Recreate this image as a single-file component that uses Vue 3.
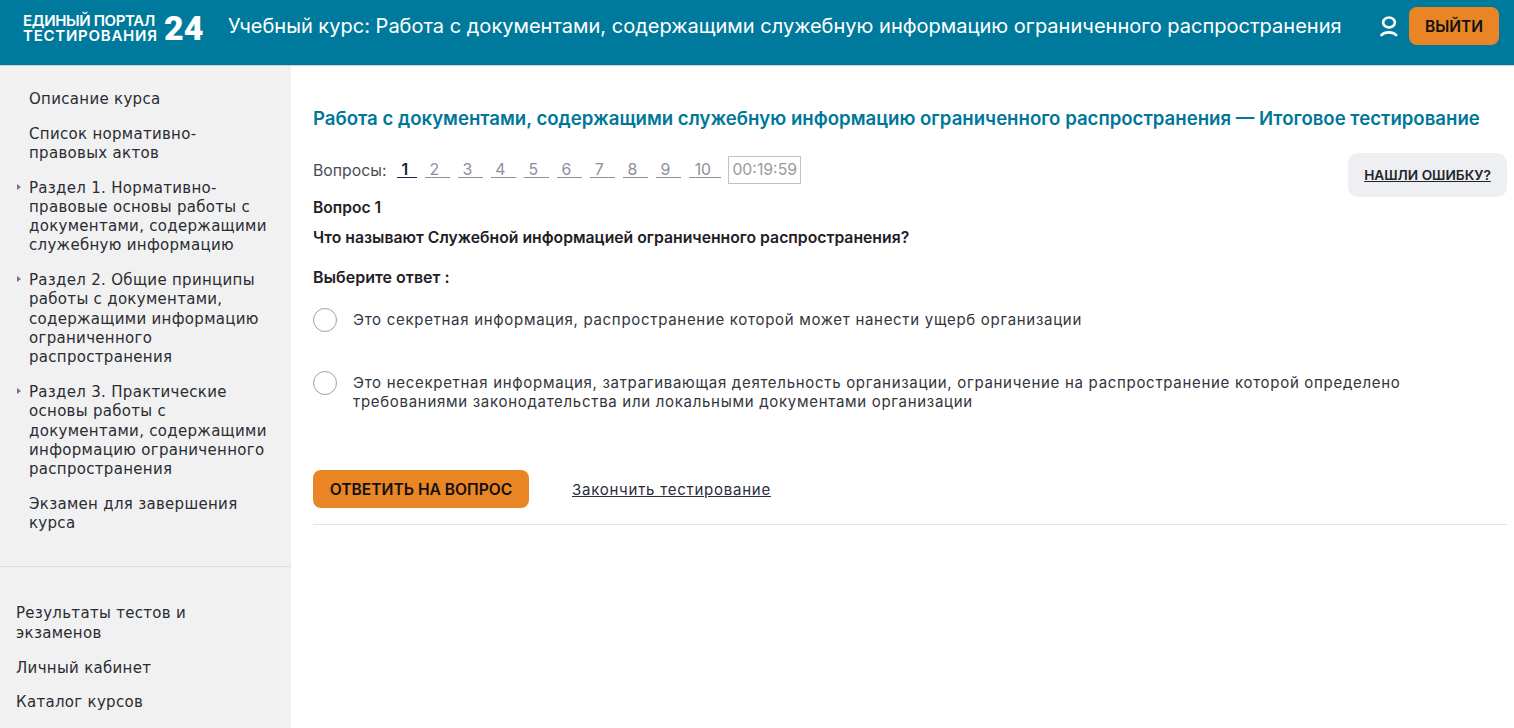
<template>
  <div class="page">
    <header class="topbar">
      <div class="logo">
        <div class="logo-text">
          <span class="logo-line1">ЕДИНЫЙ ПОРТАЛ</span>
          <span class="logo-line2">ТЕСТИРОВАНИЯ</span>
        </div>
        <div class="logo-num">24</div>
      </div>
      <div class="course-title">Учебный курс: Работа с документами, содержащими служебную информацию ограниченного распространения</div>
      <svg class="user-icon" width="18" height="21" viewBox="0 0 18 21" fill="none" stroke="#fff" stroke-width="2.6">
        <ellipse cx="9" cy="6.5" rx="5.9" ry="4.95" />
        <path d="M1.5 19 C5 15.5 12.6 15.5 16.1 19" stroke-linecap="round" />
      </svg>
      <button class="logout">ВЫЙТИ</button>
    </header>

    <div class="layout">
      <aside class="sidebar">
        <ul class="course-menu">
          <li v-for="item in courseMenu" :key="item.text" :class="{ arrow: item.arrow }">{{ item.text }}</li>
        </ul>
        <ul class="user-menu">
          <li v-for="item in userMenu" :key="item">{{ item }}</li>
        </ul>
      </aside>

      <main class="content">
        <h1 class="test-title">Работа с документами, содержащими служебную информацию ограниченного распространения — Итоговое тестирование</h1>

        <div class="nav-row">
          <div class="questions">
            <span class="questions-label">Вопросы:</span>
            <a
              v-for="n in 10"
              :key="n"
              class="q-link"
              :class="{ active: n === 1, wide: n === 10 }"
            >{{ n }}</a>
            <span class="timer">00:19:59</span>
          </div>
          <a class="report">НАШЛИ ОШИБКУ?</a>
        </div>

        <div class="q-num">Вопрос 1</div>
        <div class="q-text">Что называют Служебной информацией ограниченного распространения?</div>
        <div class="q-hint">Выберите ответ :</div>

        <label v-for="a in answers" :key="a" class="answer">
          <span class="radio"></span>
          <span class="answer-text">{{ a }}</span>
        </label>

        <div class="actions">
          <button class="submit">ОТВЕТИТЬ НА ВОПРОС</button>
          <a class="finish">Закончить тестирование</a>
        </div>
      </main>
    </div>
  </div>
</template>

<script setup>
const courseMenu = [
  { text: 'Описание курса' },
  { text: 'Список нормативно-правовых актов' },
  { text: 'Раздел 1. Нормативно-правовые основы работы с документами, содержащими служебную информацию', arrow: true },
  { text: 'Раздел 2. Общие принципы работы с документами, содержащими информацию ограниченного распространения', arrow: true },
  { text: 'Раздел 3. Практические основы работы с документами, содержащими информацию ограниченного распространения', arrow: true },
  { text: 'Экзамен для завершения курса' }
]

const userMenu = ['Результаты тестов и экзаменов', 'Личный кабинет', 'Каталог курсов']

const answers = [
  'Это секретная информация, распространение которой может нанести ущерб организации',
  'Это несекретная информация, затрагивающая деятельность организации, ограничение на распространение которой определено требованиями законодательства или локальными документами организации'
]
</script>

<style>
html, body {
  margin: 0;
  background: #fff;
}
</style>

<style scoped>
.page {
  height: 728px;
  overflow: hidden;
  font-family: Inter, "Noto Sans", sans-serif;
  color: #22242a;
}

/* шапка */
.topbar {
  position: relative;
  height: 65px;
  box-sizing: border-box;
  display: flex;
  align-items: flex-start;
  background: #007a9c;
  box-shadow: 0 1px 0 #cfd2d4;
  padding: 7px 15px 0 23px;
}
.logo {
  display: flex;
  align-items: center;
  height: 41px;
  width: 182px;
  flex-shrink: 0;
  color: #fff;
}
.logo-text {
  display: flex;
  flex-direction: column;
  font-size: 15px;
  font-weight: 600;
  line-height: 15px;
  width: 139px;
  flex-shrink: 0;
  white-space: nowrap;
}
.logo-line1 {
  letter-spacing: -0.35px;
}
.logo-line2 {
  letter-spacing: 0.75px;
}
.logo-num {
  margin: 1px 0 0 2px;
  font-family: Roboto, sans-serif;
  font-size: 34px;
  font-weight: 900;
  line-height: 38px;
}
.course-title {
  margin-left: 23px;
  margin-top: 7px;
  font-size: 20.05px;
  line-height: 24px;
  color: #fff;
  white-space: nowrap;
  flex: 1;
}
.user-icon {
  margin-top: 9px;
  margin-right: 11px;
  flex-shrink: 0;
}
.logout {
  width: 90px;
  height: 38px;
  flex-shrink: 0;
  border: none;
  border-radius: 8px;
  background: #e98525;
  color: #111;
  font-family: inherit;
  font-size: 15.5px;
  font-weight: 600;
  padding: 0;
}

.layout {
  display: flex;
  height: 663px;
}

/* боковое меню */
.sidebar {
  width: 291px;
  flex-shrink: 0;
  background: #f1f1f1;
  font-family: "DejaVu Sans", sans-serif;
  font-size: 15px;
  letter-spacing: 0.3px;
  line-height: 19.25px;
  color: #2a2c33;
}
.course-menu {
  list-style: none;
  margin: 0;
  padding: 24.7px 20px 33px 29px;
  border-bottom: 1px solid #dcdcdc;
}
.course-menu li {
  position: relative;
  margin-bottom: 15.6px;
}
.course-menu li:last-child {
  margin-bottom: 0;
}
.course-menu li.arrow::before {
  content: "";
  position: absolute;
  left: -12px;
  top: 5px;
  border-left: 4px solid #777;
  border-top: 3.5px solid transparent;
  border-bottom: 3.5px solid transparent;
}
.user-menu {
  list-style: none;
  margin: 0;
  padding: 37px 35px 0 16px;
}
.user-menu li {
  margin-bottom: 15.6px;
}

/* контент */
.content {
  flex: 1;
  min-width: 0;
  padding: 0 7px 0 22px;
}
.test-title {
  margin: 41px 0 0;
  font-size: 18.6px;
  line-height: 24px;
  font-weight: 600;
  color: #00779a;
  white-space: nowrap;
}
.nav-row {
  display: flex;
  justify-content: space-between;
  align-items: flex-start;
  margin-top: 23px;
  height: 44px;
}
.questions {
  display: flex;
  align-items: center;
  margin-top: 3px;
  height: 28px;
  font-size: 15.8px;
}
.questions-label {
  margin-right: 10.4px;
  color: #4a4c52;
}
.q-link {
  box-sizing: border-box;
  width: 25px;
  margin-right: 8px;
  text-align: center;
  line-height: 15px;
  color: #8b8f9c;
  padding-right: 6px;
  border-bottom: 1px solid #8b8f9c;
}
.q-link.active {
  width: 20px;
  padding-right: 4px;
  font-weight: 600;
  color: #1c2340;
  border-bottom-color: #1c2340;
}
.q-link.wide {
  width: 32px;
  margin-right: 7.4px;
  padding-right: 4px;
}
.timer {
  box-sizing: border-box;
  width: 73px;
  height: 28px;
  line-height: 26px;
  text-align: center;
  border: 1px solid #b8c4d4;
  color: #9a9a9a;
  white-space: nowrap;
}
.report {
  box-sizing: border-box;
  width: 159px;
  height: 44px;
  line-height: 44px;
  text-align: center;
  border-radius: 10px;
  background: #eeeff3;
  color: #22242a;
  font-size: 13.65px;
  font-weight: 600;
  text-decoration: underline;
}
.q-num, .q-text, .q-hint {
  font-weight: 600;
  line-height: 20px;
  color: #1f2025;
}
.q-num {
  margin-top: 1px;
  font-size: 15.6px;
}
.q-text {
  margin-top: 10px;
  font-size: 15.75px;
}
.q-hint {
  margin-top: 19px;
  margin-bottom: 21px;
  font-size: 16px;
}
.answer {
  display: flex;
  align-items: flex-start;
  margin-bottom: 39px;
}
.radio {
  flex-shrink: 0;
  box-sizing: border-box;
  width: 24px;
  height: 24px;
  border-radius: 50%;
  border: 1px solid #9aa0b0;
  margin-right: 16px;
}
.answer-text {
  font-size: 15px;
  line-height: 19px;
  margin-top: 2px;
  color: #33353c;
  letter-spacing: 0.7px;
  max-width: 1060px;
}
.actions {
  display: flex;
  align-items: center;
  margin-top: 59px;
  padding-bottom: 16px;
  border-bottom: 1px solid #e2e3e7;
}
.submit {
  width: 216px;
  height: 38px;
  border: none;
  border-radius: 8px;
  background: #e98525;
  color: #111;
  font-family: inherit;
  font-size: 15.6px;
  font-weight: 600;
  padding: 0;
}
.finish {
  margin-left: 43px;
  font-size: 15px;
  letter-spacing: 0.75px;
  color: #2a2c40;
  text-decoration: underline;
}
</style>
